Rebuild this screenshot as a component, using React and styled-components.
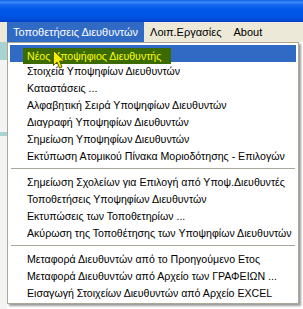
import React from 'react';
import styled, { createGlobalStyle } from 'styled-components';

const GlobalStyle = createGlobalStyle`
	html, body {
		margin: 0;
		padding: 0;
		width: 303px;
		height: 309px;
		overflow: hidden;
		background: #ffffff;
	}
	body {
		font-family: 'Liberation Sans', Arial, sans-serif;
		font-size: 11px;
		color: #000000;
	}
`;

const groups = [
	[
		'Νέος Υποψήφιος Διευθυντής',
		'Στοιχεία Υποψηφίων Διευθυντών',
		'Καταστάσεις ...',
		'Αλφαβητική Σειρά Υποψηφίων Διευθυντών',
		'Διαγραφή Υποψηφίων Διευθυντών',
		'Σημείωση Υποψηφίων Διευθυντών',
		'Εκτύπωση Ατομικού Πίνακα Μοριοδότησης - Επιλογών',
	],
	[
		'Σημείωση Σχολείων για Επιλογή από Υποψ.Διευθυντές',
		'Τοποθετήσεις Υποψηφίων Διευθυντών',
		'Εκτυπώσεις των Τοποθετηρίων ...',
		'Ακύρωση της Τοποθέτησης των Υποψηφίων Διευθυντών',
	],
	[
		'Μεταφορά Διευθυντών από το Προηγούμενο Ετος',
		'Μεταφορά Διευθυντών από Αρχείο των ΓΡΑΦΕΙΩΝ ...',
		'Εισαγωγή Στοιχείων Διευθυντών από Αρχείο EXCEL',
	],
];

const App = () => {
	return (
		<>
			<GlobalStyle />
			<StyledWindow>
				<TitleBar />
				<MenuBar>
					<MenuTitle $active>Τοποθετήσεις Διευθυντών</MenuTitle>
					<MenuTitle>Λοιπ.Εργασίες</MenuTitle>
					<MenuTitle>About</MenuTitle>
				</MenuBar>
				<Body>
					<Backdrop />
					<Dropdown>
						{groups.map((group, gi) => (
							<React.Fragment key={gi}>
								{gi > 0 && <Separator />}
								{group.map((label, i) =>
									gi === 0 && i === 0 ? (
										<Item key={label} $hover>
											<Marker>{label}</Marker>
											<Cursor viewBox='0 0 12 19' width='12' height='19'>
												<path
													d='M0.5 0.5 L0.5 15.5 L4 12 L6.5 18 L9 17 L6.5 11 L11.5 11 Z'
													fill='#f4f000'
													stroke='#5a5a00'
													strokeWidth='1'
													strokeLinejoin='round'
												/>
											</Cursor>
										</Item>
									) : (
										<Item key={label}>{label}</Item>
									)
								)}
							</React.Fragment>
						))}
					</Dropdown>
				</Body>
			</StyledWindow>
		</>
	);
};

const StyledWindow = styled.div`
	display: flex;
	flex-direction: column;
	width: 303px;
	height: 309px;
	overflow: hidden;
`;

const TitleBar = styled.div`
	height: 22px;
	background: linear-gradient(
		to bottom,
		#0a5fe6 0%,
		#3d8af7 10%,
		#1467ee 22%,
		#0058ea 45%,
		#0054e3 75%,
		#004ad6 92%,
		#0040c4 100%
	);
`;

const MenuBar = styled.div`
	display: flex;
	height: 20px;
	padding-left: 7px;
	background: #ece9d8;
`;

const MenuTitle = styled.div`
	padding: 0 6px;
	line-height: 20px;
	white-space: nowrap;
	background: ${(p) => (p.$active ? '#316ac5' : 'transparent')};
	color: ${(p) => (p.$active ? '#ffffff' : '#000000')};
`;

const Body = styled.div`
	display: flex;
	flex: 1;
	align-items: flex-start;
`;

const Backdrop = styled.div`
	width: 7px;
	flex-shrink: 0;
	height: 267px;
	background: linear-gradient(
		to bottom,
		#a9d3d1 0px,
		#a9d3d1 18px,
		#f4f4f4 18px,
		#f4f4f4 90px,
		#a9d3d1 90px,
		#a9d3d1 94px,
		#f4f4f4 94px
	);
`;

const Dropdown = styled.div`
	display: flex;
	flex-direction: column;
	width: 286px;
	padding: 2px;
	font-size: 10.6px;
	background: #ffffff;
	border: 1px solid #aca899;
	box-shadow: 2px 2px 2px rgba(0, 0, 0, 0.4);
`;

const Item = styled.div`
	position: relative;
	display: flex;
	align-items: center;
	height: 17px;
	padding-left: 17px;
	white-space: nowrap;
	background: ${(p) => (p.$hover ? '#316ac5' : 'transparent')};
`;

const Marker = styled.span`
	position: relative;
	top: 2px;
	margin-left: -4px;
	padding: 0 10px 0 4px;
	height: 16px;
	line-height: 16px;
	background: #3a6a00;
	color: #ffff00;
`;

const Cursor = styled.svg`
	position: absolute;
	left: 43px;
	top: 5px;
`;

const Separator = styled.div`
	height: 9px;
	display: flex;
	align-items: center;
	padding: 0 1px;

	&::before {
		content: '';
		flex: 1;
		height: 1px;
		background: #aca899;
	}
`;

export default App;
